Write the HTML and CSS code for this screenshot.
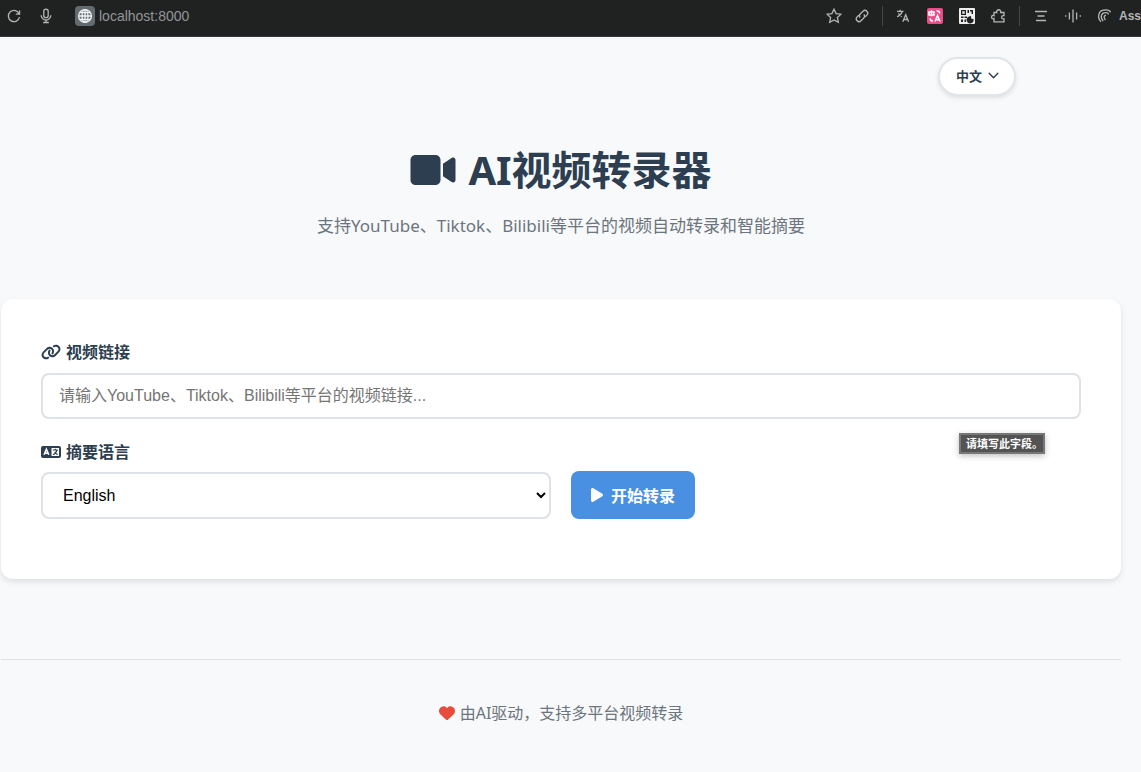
FILE: index.html
```html
<!DOCTYPE html>
<html lang="zh-CN">

<head>
  <meta charset="UTF-8" />
  <meta name="viewport" content="width=device-width, initial-scale=1.0" />
  <title>AI视频转录器</title>
  <link rel="stylesheet" href="styles.css">
</head>

<body>
  <!-- Browser toolbar -->
  <div class="toolbar">
    <div class="tools tools-left">
      <button class="tool" aria-label="Reload">
        <svg viewBox="0 0 16 16"><path d="M13.2 6A5.6 5.6 0 1 0 13.5 9M13.6 2.5V6.2H9.9" /></svg>
      </button>
      <button class="tool" aria-label="Microphone">
        <svg viewBox="0 0 16 16"><rect x="5.8" y="1.2" width="4.4" height="8.4" rx="2.2" /><path d="M3.2 7.2a4.8 4.8 0 0 0 9.6 0M8 12v2.5M5.2 14.5h5.6" /></svg>
      </button>
    </div>
    <div class="address">
      <span class="site">
        <svg viewBox="0 0 16 16"><circle cx="8" cy="8" r="6.4" /><ellipse cx="8" cy="8" rx="3" ry="6.4" /><path d="M8 1.6v12.8M1.6 8h12.8M2.6 4.7h10.8M2.6 11.3h10.8" /></svg>
      </span>
      <span>localhost:8000</span>
    </div>
    <div class="tools tools-page">
      <button class="tool" aria-label="Bookmark">
        <svg viewBox="0 0 16 16"><path d="M8 1.2l2.1 4.4 4.8.6-3.5 3.3.9 4.8L8 12l-4.3 2.3.9-4.8L1.1 6.2l4.8-.6z" /></svg>
      </button>
      <button class="tool" aria-label="Copy link">
        <svg viewBox="0 0 16 16"><path d="M6.1 9.6a2.8 2.8 0 0 1 .3-3.8l2.6-2.6a2.7 2.7 0 0 1 3.9 3.9l-1.6 1.6M9.9 6.4a2.8 2.8 0 0 1-.3 3.8L7 12.8a2.7 2.7 0 0 1-3.9-3.9l1.6-1.6" /></svg>
      </button>
    </div>
    <div class="tools tools-ext">
      <button class="tool" aria-label="Translate">
        <svg viewBox="0 0 16 16"><path d="M2 3.4h6.5M5.2 1.8v1.6M7.2 3.4C6.5 6 4.7 7.8 2.2 8.8M3.4 5.3c.8 1.5 2 2.5 3.6 3.2M7.8 13.8l2.9-7 2.9 7M8.8 11.5h3.8" /></svg>
      </button>
      <button class="tool" aria-label="Immersive translate">
        <svg viewBox="0 0 16 16"><rect class="pink" width="16" height="16" rx="2" /><path class="white" d="M2 4h5v3H2zM4.5 2.2v6M8 13.5l2.5-6 2.5 6M9 11.7h3M9.5 2.8c2 0 3 .7 3.3 2.5M3 10.3c.3 2 1.3 2.8 3 2.8" /></svg>
      </button>
      <button class="tool" aria-label="QR code">
        <svg viewBox="0 0 16 16"><rect class="paper" width="16" height="16" rx="1" /><path class="dark" fill-rule="evenodd" d="M2 2h5v5H2zM3.3 3.3v2.4h2.4V3.3zM8.5 2H10v3H8.5zM11 2h3v4h-1.5V3.5H11zM2 8.5h2.5V10H2zM5.5 8.5H8V10H5.5zM2 11.5h2V14H2zM5.5 11.5H7V14H5.5zM12 8l.3 2.7 2.2.3a3.5 3.5 0 1 1-4.5-2.5z" /></svg>
      </button>
      <button class="tool" aria-label="Extensions">
        <svg viewBox="0 0 16 16"><path d="M3 4.5h2.7a2.1 2.1 0 1 1 4 0H13V7.6h-.8a1.6 1.6 0 0 0 0 3.2h.8v3H3v-3.2a1.7 1.7 0 1 1 0-3z" /></svg>
      </button>
    </div>
    <div class="tools tools-side">
      <button class="tool" aria-label="Reading list">
        <svg viewBox="0 0 16 16"><path d="M2 3.5h12M4.5 8h7M3 12.5h10" /></svg>
      </button>
      <button class="tool" aria-label="Voice">
        <svg viewBox="0 0 16 16"><path d="M.7 7.3v1.4M4.4 4.5v7M8 1.5v13M11.6 4.5v7M15.3 7.3v1.4" /></svg>
      </button>
      <button class="tool assistant">
        <svg viewBox="0 0 16 16"><path d="M4 13.8C.2 10 .8 2.2 7.7 2M6.2 13C2.8 9.5 4.2 4.8 8.3 4.7M8.5 12C6.5 9.7 6.8 7.7 9 7.2M7.7 2c3-.3 5.2.6 5.8 2.3M8.3 4.7c2-.2 3 .5 3.3 1.8" /></svg>
        <span>Ass</span>
      </button>
    </div>
  </div>

  <div class="container">
    <div class="language-bar">
      <button class="lang-toggle">
        <span>中文</span>
        <svg class="chevron" viewBox="0 0 12 12"><path d="M2 4l4 4 4-4" /></svg>
      </button>
    </div>

    <header class="header">
      <h1>
        <svg class="icon-video" viewBox="0 0 576 512"><path d="M0 128C0 92.7 28.7 64 64 64H320c35.3 0 64 28.7 64 64V384c0 35.3-28.7 64-64 64H64c-35.3 0-64-28.7-64-64V128zM559.1 99.8c10.4 5.6 16.9 16.4 16.9 28.2V384c0 11.8-6.5 22.6-16.9 28.2s-23 5-32.9-1.6l-96-64L416 337.1V174.9l14.2-9.5 96-64c9.8-6.5 22.4-7.2 32.9-1.6z" /></svg>
        <span>AI视频转录器</span>
      </h1>
      <p>支持YouTube、Tiktok、Bilibili等平台的视频自动转录和智能摘要</p>
    </header>

    <main class="card">
      <form class="form">
        <div class="field field-url">
          <label for="videoUrl">
            <svg class="icon" viewBox="0 0 640 512"><path d="M579.8 267.7c56.5-56.5 56.5-148 0-204.5c-50-50-128.8-56.5-186.3-15.4l-1.6 1.1c-14.4 10.3-17.7 30.3-7.4 44.6s30.3 17.7 44.6 7.4l1.6-1.1c32.1-22.9 76-19.3 103.8 8.6c31.5 31.5 31.5 82.5 0 114L422.3 334.8c-31.5 31.5-82.5 31.5-114 0c-27.9-27.9-31.5-71.8-8.6-103.8l1.1-1.6c10.3-14.4 6.9-34.4-7.4-44.6s-34.4-6.9-44.6 7.4l-1.1 1.6C206.5 251.2 213 330 263 380c56.5 56.5 148 56.5 204.5 0L579.8 267.7zM60.2 244.3c-56.5 56.5-56.5 148 0 204.5c50 50 128.8 56.5 186.3 15.4l1.6-1.1c14.4-10.3 17.7-30.3 7.4-44.6s-30.3-17.7-44.6-7.4l-1.6 1.1c-32.1 22.9-76 19.3-103.8-8.6C74 372 74 321 105.5 289.5L217.7 177.2c31.5-31.5 82.5-31.5 114 0c27.9 27.9 31.5 71.8 8.6 103.9l-1.1 1.6c-10.3 14.4-6.9 34.4 7.4 44.6s34.4 6.9 44.6-7.4l1.1-1.6C433.5 260.8 427 182 377 132c-56.5-56.5-148-56.5-204.5 0L60.2 244.3z" /></svg>
            视频链接
          </label>
          <input type="url" id="videoUrl" placeholder="请输入YouTube、Tiktok、Bilibili等平台的视频链接..." required>
          <div class="tooltip" role="tooltip">请填写此字段。</div>
        </div>

        <div class="form-row">
          <div class="field field-lang">
            <label for="summaryLang">
              <svg class="icon" viewBox="0 0 20 16"><path fill-rule="evenodd" d="M2 2h16a2 2 0 0 1 2 2v8a2 2 0 0 1-2 2H2a2 2 0 0 1-2-2V4a2 2 0 0 1 2-2zM10.5 4v8H18V4z" /><path class="line-light" d="M3 10.8L5.4 5.3l2.4 5.5M4 9.3h2.8" /><path class="line" d="M11.8 6h5M14.3 4.7V6M16 6.2c-.7 2.2-2 3.7-4 4.6M13.6 8c.8 1.3 1.7 2 3 2.7" /></svg>
              摘要语言
            </label>
            <select id="summaryLang">
              <option>English</option>
            </select>
          </div>
          <button type="submit" class="submit">
            <svg class="icon-play" viewBox="0 0 384 512"><path d="M73 39c-14.8-9.1-33.4-9.4-48.5-.9S0 62.6 0 80V432c0 17.4 9.4 33.4 24.5 41.9s33.7 8.1 48.5-.9L361 297c14.3-8.7 23-24.2 23-41s-8.7-32.2-23-41L73 39z" /></svg>
            开始转录
          </button>
        </div>
      </form>
    </main>

    <footer class="footer">
      <svg class="icon-heart" viewBox="0 0 512 512"><path d="M47.6 300.4L228.3 469.1c7.5 7 17.4 10.9 27.7 10.9s20.2-3.9 27.7-10.9L464.4 300.4c30.4-28.3 47.6-68 47.6-109.5v-5.8c0-69.9-50.5-129.5-119.4-141C347 36.5 300.6 51.4 268 84L256 96 244 84c-32.6-32.6-79-47.5-124.6-39.9C50.5 55.6 0 115.2 0 185.1v5.8c0 41.5 17.2 81.2 47.6 109.5z" /></svg>
      <p>由AI驱动，支持多平台视频转录</p>
    </footer>
  </div>
</body>

</html>
```

FILE: styles.css
```css
* {
  box-sizing: border-box;
  margin: 0;
  padding: 0;
}

body {
  background-color: #f8f9fb;
  color: #2c3e50;
  font-family: "Noto Sans", "Noto Sans CJK SC", sans-serif;
  font-size: 16px;
  line-height: 26px;
}

button,
input,
select {
  font-family: "Liberation Sans", "Noto Sans CJK SC", sans-serif;
  font-size: 16px;
}

svg {
  display: block;
  flex-shrink: 0;
  fill: currentColor;
}

/* Toolbar */
.toolbar {
  display: flex;
  align-items: center;
  height: 37px;
  padding: 0 0 4px 6px;
  background-color: #202221;
  border-bottom: 1px solid #363939;
  color: #b4b6b6;
  font-family: "Liberation Sans", sans-serif;
  font-size: 14px;
  overflow: hidden;
}

.toolbar svg {
  width: 16px;
  height: 16px;
  fill: none;
  stroke: currentColor;
  stroke-width: 1.3;
}

.tools {
  display: flex;
  align-items: center;
  gap: 16px;
}

.tools-left {
  margin-right: 21px;
}

.tools-page {
  gap: 12px;
  margin-left: auto;
}

.tools-ext,
.tools-side {
  height: 20px;
  margin-left: 12px;
  padding-left: 12px;
  border-left: 1px solid #444747;
}

.tools-side {
  padding-left: 13px;
}

.tool {
  display: flex;
  align-items: center;
  border: none;
  background: none;
  color: inherit;
  cursor: pointer;
}

.assistant {
  gap: 6px;
  font-size: 12px;
  font-weight: bold;
}

.toolbar .pink {
  fill: #ea4c89;
  stroke: none;
}

.toolbar .white {
  stroke: #fff;
  stroke-width: 1.5;
}

.toolbar .paper {
  fill: #eee;
  stroke: none;
}

.toolbar .dark {
  fill: #202221;
  stroke: none;
}

.address {
  display: flex;
  align-items: center;
  gap: 4px;
  color: #929697;
}

.site {
  display: flex;
  align-items: center;
  justify-content: center;
  width: 20px;
  height: 20px;
  border-radius: 4px;
  background-color: #626b70;
  color: #f0f2f2;
}

/* Page */
.container {
  max-width: 1200px;
  margin: 0 20px 0 1px;
}

.language-bar {
  display: flex;
  justify-content: flex-end;
  padding: 20px 105px 0 0;
}

.lang-toggle {
  display: flex;
  align-items: center;
  gap: 5px;
  height: 39px;
  padding: 0 14px 2px 16px;
  border: 2px solid #e1e5e9;
  border-radius: 20px;
  background-color: #fff;
  color: #2c3e50;
  box-shadow: 0 2px 4px rgba(0, 0, 0, 0.1);
  font-size: 13px;
  font-weight: bold;
  cursor: pointer;
}

.chevron {
  width: 13px;
  height: 13px;
  fill: none;
  stroke: currentColor;
  stroke-width: 1.3;
  stroke-linecap: round;
}

.header {
  padding: 43px 0 60px;
  text-align: center;
}

.header h1 {
  display: flex;
  align-items: center;
  justify-content: center;
  gap: 12px;
  margin-bottom: 13px;
  font-size: 40px;
  line-height: 61px;
}

.icon-video {
  width: 46px;
  height: 40px;
}

.header p {
  color: #6c757d;
  font-size: 17px;
}

.card {
  padding: 40px 40px 60px;
  border-radius: 12px;
  background-color: #fff;
  box-shadow: 0 3px 6px rgba(0, 0, 0, 0.1);
}

.form {
  display: flex;
  flex-direction: column;
  gap: 20px;
}

.field {
  display: flex;
  flex-direction: column;
  gap: 8px;
}

.field-url {
  position: relative;
}

.field-lang {
  gap: 7px;
}

.field label {
  display: flex;
  align-items: center;
  gap: 5px;
  font-weight: bold;
}

.icon {
  width: 20px;
  height: 16px;
}

.line,
.line-light {
  fill: none;
  stroke: currentColor;
  stroke-width: 1.2;
}

.line-light {
  stroke: #fff;
  stroke-width: 1.6;
}

.field input,
.field select {
  width: 100%;
  height: 46px;
  padding: 0 16px;
  border: 2px solid #dee2e6;
  border-radius: 8px;
  background-color: #fff;
  color: #000;
}

.field select {
  height: 47px;
}

.field input::placeholder {
  color: #757575;
}

.form-row {
  display: grid;
  grid-template-columns: 1fr 1fr;
  align-items: end;
  gap: 20px;
}

.submit {
  display: flex;
  align-items: center;
  justify-self: start;
  gap: 8px;
  height: 48px;
  padding: 0 20px 1px;
  border: none;
  border-radius: 8px;
  background-color: #4a90e2;
  color: #fff;
  font-weight: bold;
  cursor: pointer;
}

.icon-play {
  width: 12px;
  height: 16px;
}

.tooltip {
  position: absolute;
  top: 94px;
  right: 36px;
  padding-left: 5px;
  border: 2px solid #777;
  background-color: #535353;
  box-shadow: 0 2px 6px rgba(0, 0, 0, 0.25);
  color: #fff;
  font-size: 11px;
  font-weight: bold;
  line-height: 17px;
}

.footer {
  display: flex;
  align-items: center;
  justify-content: center;
  gap: 5px;
  margin-top: 80px;
  padding: 40px 0;
  border-top: 1px solid #dee2e6;
  color: #6c757d;
}

.icon-heart {
  width: 16px;
  height: 16px;
  color: #e74c3c;
}
```
